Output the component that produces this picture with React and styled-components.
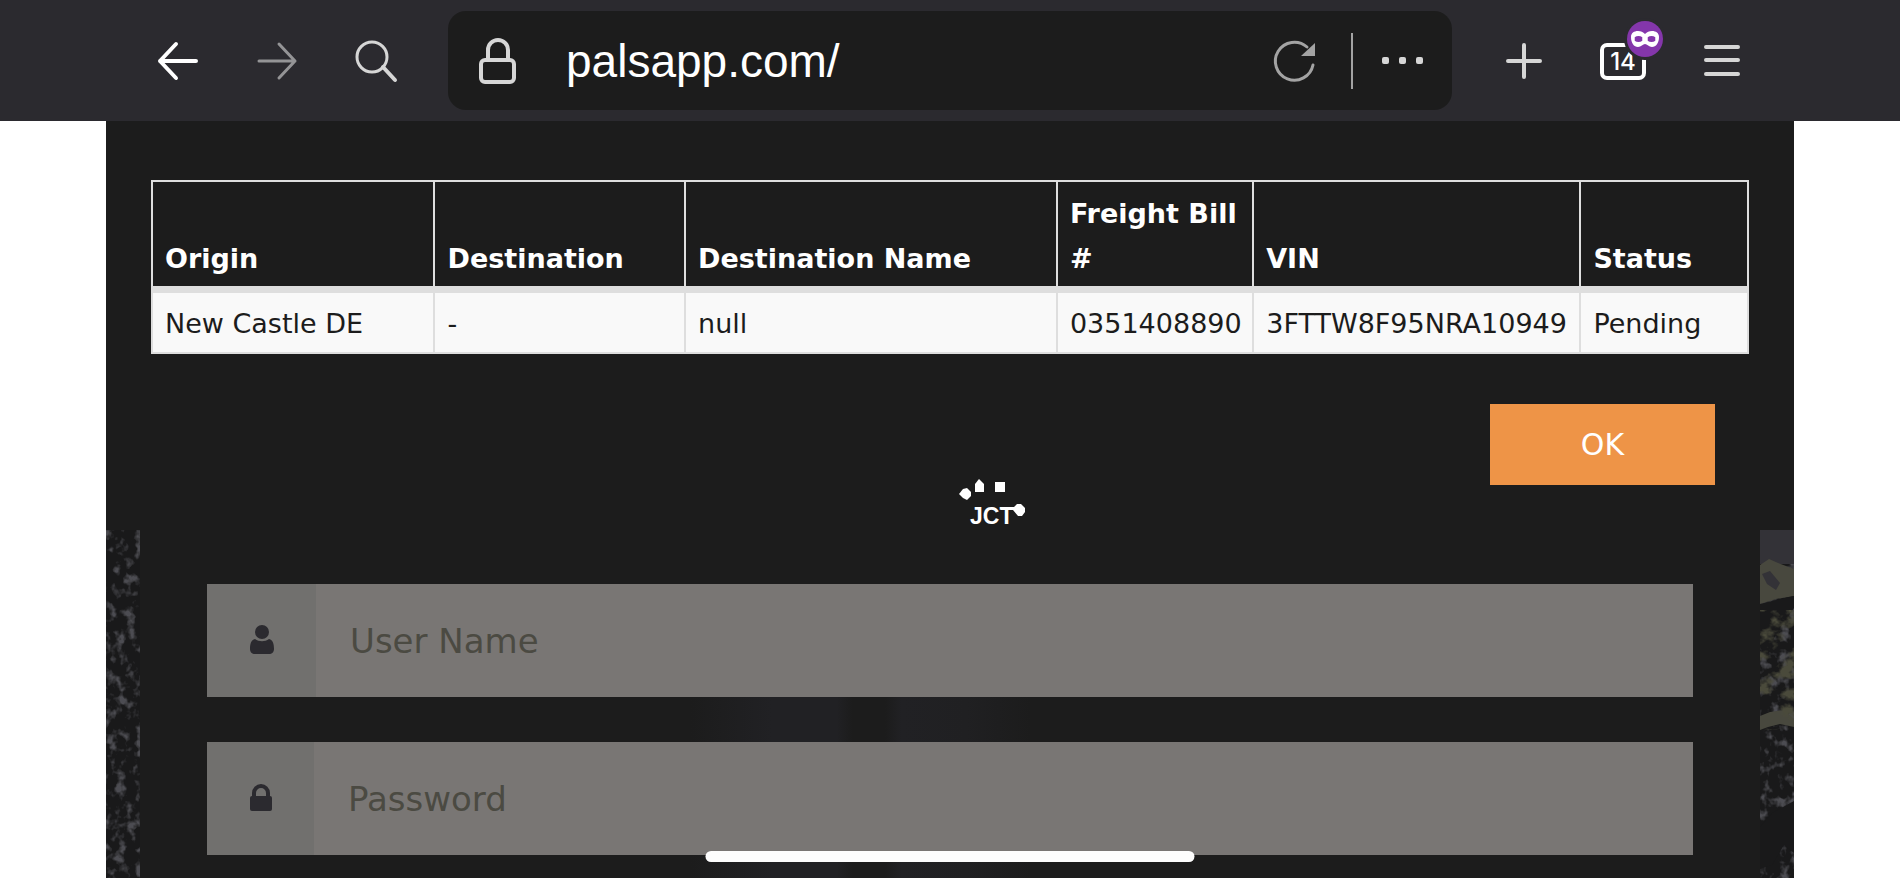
import React from "react";
import styled, { createGlobalStyle } from "styled-components";

const color = {
  chrome: "#2b2a2f",
  sheet: "#1c1c1c",
  rule: "#dedede",
  icon: "#d6d6d6",
  muted: "#a3a3a3",
  field: "#797674",
  addon: "#71706e",
  glyph: "#2b2a2f",
};

const GlobalStyle = createGlobalStyle`
  *, *::before, *::after { box-sizing: border-box; }
  body {
    margin: 0;
    background: #fff;
    font-family: "DejaVu Sans", Verdana, sans-serif;
  }
`;

const Screen = styled.div`
  position: relative;
  display: flex;
  flex-direction: column;
  min-height: 100vh;
`;

const Toolbar = styled.header`
  display: flex;
  align-items: center;
  height: 121px;
  padding: 0 106px;
  background: ${color.chrome};
`;

const ToolGroup = styled.nav`
  display: flex;
  align-items: center;
  gap: ${(p) => p.$gap}px;
  padding: 0 ${(p) => p.$padRight}px 0 ${(p) => p.$padLeft}px;
`;

const IconButton = styled.button`
  display: flex;
  padding: 0;
  border: 0;
  background: none;
  color: ${(p) => p.$tone || color.icon};

  svg {
    display: block;
    overflow: visible;
  }
`;

const AddressBar = styled.div`
  flex: 1;
  display: flex;
  align-items: center;
  min-width: 0;
  height: 99px;
  padding: 0 29px 0 31px;
  border-radius: 18px;
  background: ${color.sheet};
  color: ${color.icon};
`;

const AddressInput = styled.input`
  flex: 1;
  min-width: 0;
  margin-left: 50px;
  padding: 0;
  border: 0;
  outline: 0;
  background: none;
  color: #fff;
  font: 400 46px/60px "Liberation Sans", Arial, sans-serif;
`;

const Divider = styled.span`
  width: 2px;
  height: 56px;
  margin: 0 29px 0 35px;
  background: ${color.muted};
`;

const Sheet = styled.main`
  flex: 1;
  display: flex;
  flex-direction: column;
  margin: 0 106px;
  padding-top: 59px;
  background: ${color.sheet};
`;

const Results = styled.section`
  padding: 0 45px;
`;

const ResultTable = styled.table`
  width: 100%;
  table-layout: fixed;
  border-collapse: collapse;
  border: 2px solid ${color.rule};
  font-size: 27px;
  line-height: 45px;
`;

const Col = styled.col`
  width: ${(p) => p.$share}%;
`;

const HeadCell = styled.th`
  padding: 9px 12px 5px;
  border: 2px solid ${color.rule};
  border-bottom-width: 7px;
  color: #fff;
  font-weight: 700;
  text-align: left;
  vertical-align: bottom;
`;

const DataCell = styled.td`
  padding: 8px 12px 6px;
  border: 2px solid ${color.rule};
  background: #f9f9f9;
  color: #1c1c1c;
  white-space: nowrap;
`;

const Actions = styled.div`
  display: flex;
  justify-content: flex-end;
  padding: 50px 79px 0 0;
`;

const OkButton = styled.button`
  width: 225px;
  height: 81px;
  border: 0;
  background: #ee9447;
  color: #fff;
  font-family: inherit;
  font-size: 30px;
`;

const Login = styled.section`
  position: relative;
  flex: 1;
  display: flex;
  margin-top: 45px;
`;

const PhotoEdge = styled.svg`
  flex: none;
  width: 34px;
  height: 349px;
`;

const LoginForm = styled.form`
  flex: 1;
  display: flex;
  flex-direction: column;
  gap: 45px;
  padding: 54px 67px 25px;
  background: linear-gradient(
      90deg,
      transparent 34%,
      #212124 39%,
      #212124 43%,
      #1c1c1c 44%,
      #1c1c1c 46%,
      #212124 47%,
      #202022 51%,
      transparent 55%
    )
    0 160px no-repeat;
`;

const Field = styled.label`
  display: flex;
  height: 113px;
  background: ${color.field};
`;

const Addon = styled.span`
  display: flex;
  align-items: center;
  padding: 0 42px 2px 43px;
  background: ${color.addon};
  color: ${color.glyph};
`;

const FieldInput = styled.input`
  flex: 1;
  min-width: 0;
  padding: 0 34px;
  border: 0;
  outline: 0;
  background: none;
  color: ${color.glyph};
  font-family: inherit;
  font-size: 34px;

  &::placeholder {
    color: #4b4a42;
    opacity: 1;
  }
`;

const Spinner = styled.svg`
  position: absolute;
  left: 50%;
  top: -51px;
  margin-left: 9px;
  overflow: visible;
`;

const HomeIndicator = styled.div`
  position: absolute;
  left: 50%;
  bottom: 18px;
  width: 489px;
  height: 11px;
  border-radius: 6px;
  background: #fdfdfd;
  transform: translateX(-50%);
`;

const line = {
  fill: "none",
  stroke: "currentColor",
  strokeWidth: 3,
  strokeLinecap: "round",
  strokeLinejoin: "round",
};

const BackIcon = () => (
  <svg width="40" height="38" viewBox="0 0 40 38" {...line} strokeWidth="4">
    <path d="M18 2 2 19l16 17M2 19h36" />
  </svg>
);

const ForwardIcon = () => (
  <svg width="40" height="38" viewBox="0 0 40 38" {...line}>
    <path d="M22 2l16 17-16 17M38 19H2" />
  </svg>
);

const SearchIcon = () => (
  <svg width="41" height="42" viewBox="0 0 41 42" {...line}>
    <circle cx="16" cy="17" r="15" />
    <path d="M27 27l12 13" strokeWidth="4" />
  </svg>
);

const PadlockIcon = () => (
  <svg width="37" height="46" viewBox="0 0 37 46" {...line} strokeWidth="4">
    <rect x="2" y="22" width="33" height="22" rx="4" />
    <path d="M9 22V12a10 10 0 0 1 20 0v10" />
  </svg>
);

const ReloadIcon = () => (
  <svg width="42" height="42" viewBox="0 0 42 42" {...line}>
    <path d="M39 25A19 19 0 1 1 33 7" />
    <path d="M41 3v13H27z" fill="currentColor" stroke="none" />
  </svg>
);

const DotsIcon = () => (
  <svg width="41" height="8" viewBox="0 0 41 8" fill="currentColor">
    <rect x="0" width="7" height="7" rx="2" />
    <rect x="17" width="7" height="7" rx="2" />
    <rect x="34" width="7" height="7" rx="2" />
  </svg>
);

const PlusIcon = () => (
  <svg width="36" height="36" viewBox="0 0 36 36" {...line} strokeWidth="4">
    <path d="M18 2v32M2 18h32" />
  </svg>
);

const TabsIcon = () => (
  <svg width="46" height="38" viewBox="0 0 46 38" {...line}>
    <rect x="2" y="3" width="42" height="33" rx="5" strokeWidth="4" />
    <text
      x="23"
      y="28"
      textAnchor="middle"
      fill="currentColor"
      stroke="none"
      fontFamily="Inter, sans-serif"
      fontSize="24"
      fontWeight="500"
    >
      14
    </text>
    <circle cx="45" cy="-3" r="21" fill={color.chrome} stroke="none" />
    <circle cx="45" cy="-3" r="18" fill="#8436ab" stroke="none" />
    <path
      fill="#fff"
      stroke="none"
      fillRule="evenodd"
      d="M31-5c0-4 3-6 7-6 3 0 5 1 7 3 2-2 4-3 7-3 4 0 7 2 7 6 0 6-3 10-7 10-3 0-5-3-7-3s-4 3-7 3c-4 0-7-4-7-10zM35-3a4 2 0 1 0 7 0 4 2 0 1 0-7 0zM48-3a4 2 0 1 0 7 0 4 2 0 1 0-7 0z"
    />
  </svg>
);

const MenuIcon = () => (
  <svg width="36" height="31" viewBox="0 0 36 31" {...line} strokeWidth="4">
    <path d="M2 2h32M2 15h32M2 29h32" />
  </svg>
);

const UserIcon = () => (
  <svg width="24" height="30" viewBox="0 0 24 30" fill="currentColor">
    <circle cx="12" cy="7" r="7" />
    <path d="M5 14c4 3 10 3 14 0 4 1 5 5 5 10 0 3-2 5-5 5H5c-3 0-5-2-5-5 0-5 1-9 5-10z" />
  </svg>
);

const LockIcon = () => (
  <svg width="22" height="28" viewBox="0 0 22 28">
    <rect y="12" width="22" height="15" rx="2" fill="currentColor" />
    <path d="M4 14V9a7 7 0 0 1 14 0v5" fill="none" stroke="currentColor" strokeWidth="4" />
  </svg>
);

const JctSpinner = () => (
  <Spinner width="66" height="50" viewBox="0 0 66 50" fill="#fff" role="img" aria-label="Loading">
    <path d="M0 15l4-5 4-1 4 4v4l-4 4-4-2z" />
    <path d="M16 5l4-5 5 5v8h-9z" />
    <rect x="36" y="3" width="10" height="10" />
    <path d="M42 28h13l3-3h4l4 4v4l-3 4h-4l-5-6H42z" />
    <text x="11" y="45" fontFamily="Liberation Sans, Arial, sans-serif" fontSize="23" fontWeight="700">
      JCT
    </text>
  </Spinner>
);

// Sliver of the dimmed background photo; `tint` lays the foliage patches over the specks.
const Foliage = ({ id, seed, tint }) => (
  <PhotoEdge aria-hidden="true">
    <defs>
      <filter id={id} x="0" y="0" width="100%" height="100%" colorInterpolationFilters="sRGB">
        <feTurbulence type="fractalNoise" baseFrequency="0.1 0.09" numOctaves="3" seed={seed} />
        <feColorMatrix values="0 0 0 0 0.3  0 0 0 0 0.3  0 0 0 0 0.32  4 0 0 0 -2" />
      </filter>
      <filter id={`${id}-tint`} x="0" y="0" width="100%" height="100%" colorInterpolationFilters="sRGB">
        <feTurbulence type="fractalNoise" baseFrequency="0.05 0.06" numOctaves="4" seed={seed + 2} />
        <feColorMatrix values="0 0 0 0 0.29  0 0 0 0 0.29  0 0 0 0 0.23  5 0 0 0 -2.6" />
      </filter>
    </defs>
    <rect width="34" height="349" fill="#19191a" />
    <rect width="34" height="349" filter={`url(#${id})`} />
    {tint && (
      <>
        <path d="M0 0h34v34H0z" fill="#333237" />
        <path d="M0 35l9-6 9 4 16 6v27l-18 3-16 5z" fill="#48483e" />
        <path d="M2 44l8-3 10 12-4 7-9-6z" fill="#333237" />
        <path d="M0 74l16-4 18-4v12L20 98l-8 14-12-8z" fill="#19191a" />
        <path d="M0 186l10-4 14-2 10 9v8l-14-3-12 3-8 3z" fill="#48483e" />
        <rect y="80" width="34" height="120" filter={`url(#${id}-tint)`} />
        <path d="M12 283l22-12v52l-10-8-12 20-12 4v-42z" fill="#19191a" />
      </>
    )}
  </PhotoEdge>
);

const columns = [
  { label: "Origin", value: "New Castle DE", share: 17.7 },
  { label: "Destination", value: "-", share: 15.7 },
  { label: "Destination Name", value: "null", share: 23.3 },
  { label: "Freight Bill #", value: "0351408890", share: 12.3 },
  { label: "VIN", value: "3FTTW8F95NRA10949", share: 20.5 },
  { label: "Status", value: "Pending", share: 10.5 },
];

export default function App() {
  return (
    <Screen>
      <GlobalStyle />
      <Toolbar>
        <ToolGroup aria-label="History" $gap={59} $padLeft={52} $padRight={51}>
          <IconButton aria-label="Back" $tone="#fff"><BackIcon /></IconButton>
          <IconButton aria-label="Forward" $tone="#949496"><ForwardIcon /></IconButton>
          <IconButton aria-label="Search"><SearchIcon /></IconButton>
        </ToolGroup>
        <AddressBar>
          <PadlockIcon />
          <AddressInput aria-label="Address" defaultValue="palsapp.com/" />
          <IconButton aria-label="Reload" $tone={color.muted}><ReloadIcon /></IconButton>
          <Divider />
          <IconButton aria-label="Page actions"><DotsIcon /></IconButton>
        </AddressBar>
        <ToolGroup aria-label="Tabs" $gap={58} $padLeft={54} $padRight={54}>
          <IconButton aria-label="New tab"><PlusIcon /></IconButton>
          <IconButton aria-label="Open tabs" $tone="#fff"><TabsIcon /></IconButton>
          <IconButton aria-label="Menu"><MenuIcon /></IconButton>
        </ToolGroup>
      </Toolbar>
      <Sheet>
        <Results>
          <ResultTable>
            <colgroup>
              {columns.map((c) => <Col key={c.label} $share={c.share} />)}
            </colgroup>
            <thead>
              <tr>{columns.map((c) => <HeadCell key={c.label} scope="col">{c.label}</HeadCell>)}</tr>
            </thead>
            <tbody>
              <tr>{columns.map((c) => <DataCell key={c.label}>{c.value}</DataCell>)}</tr>
            </tbody>
          </ResultTable>
        </Results>
        <Actions>
          <OkButton type="button">OK</OkButton>
        </Actions>
        <Login>
          <Foliage id="edge-left" seed={4} />
          <LoginForm>
            <Field>
              <Addon><UserIcon /></Addon>
              <FieldInput type="text" aria-label="User Name" placeholder="User Name" />
            </Field>
            <Field>
              <Addon><LockIcon /></Addon>
              <FieldInput type="password" aria-label="Password" placeholder="Password" />
            </Field>
          </LoginForm>
          <Foliage id="edge-right" seed={9} tint />
          <JctSpinner />
        </Login>
      </Sheet>
      <HomeIndicator />
    </Screen>
  );
}
